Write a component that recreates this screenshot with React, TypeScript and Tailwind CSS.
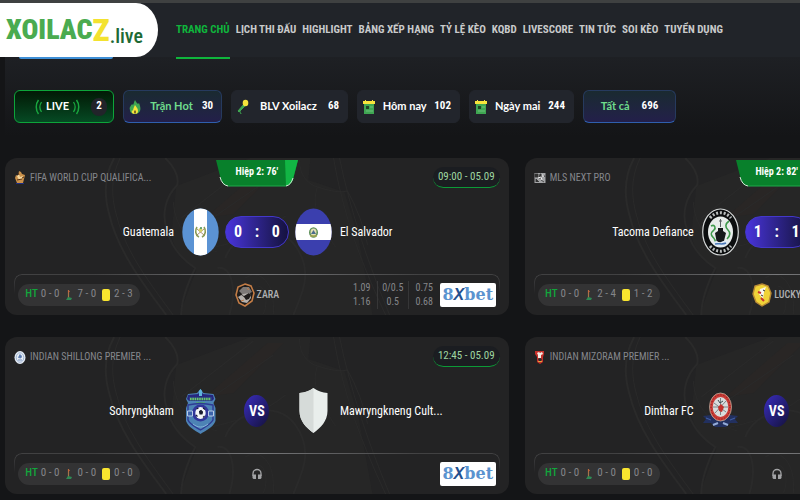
import type { ReactNode } from "react"

interface Match {
  league: string
  leagueIcon: ReactNode
  time: string
  live?: string
  score?: [number, number]
  home: string
  away: string
  homeLogo: ReactNode
  awayLogo: ReactNode
  stats: [string, string, string]
  caster?: string
  casterIcon?: ReactNode
  odds?: [string, string][]
}

const navItems = [
  "TRANG CHỦ",
  "LỊCH THI ĐẤU",
  "HIGHLIGHT",
  "BẢNG XẾP HẠNG",
  "TỶ LỆ KÈO",
  "KQBD",
  "LIVESCORE",
  "TIN TỨC",
  "SOI KÈO",
  "TUYỂN DỤNG",
]

// League icons

const TrophyIcon = () => (
  <svg className="h-4 w-3 shrink-0" viewBox="0 0 12 16">
    <path d="M5 1l2 1 1 2 3 1-1 4-1 4H3L1 8l1-3 2 1z" fill="#c9904a" />
    <path d="M3 6l2-2 1 3 3-1-1 3-3 1z" fill="#f6d9a0" />
    <path d="M4 3l1 2M8 8l2-1M3 10l5-1" stroke="#5a3213" strokeWidth="1" />
    <path d="M2 13h8v1H2z" fill="#1e2f86" />
  </svg>
)

const MlsIcon = () => (
  <svg className="h-4 w-3 shrink-0" viewBox="0 0 12 16">
    <rect x="0.500" y="3" width="11" height="10" fill="#a3a4a6" />
    <path d="M1 4h3v3H1zM6 4h1v4H5zM9 4l2 3M2 12V9l3 3M7 10l3 2" fill="#333" stroke="#333" strokeWidth="0.8" />
    <path d="M4 8l3-1 1 3M9 4v3" stroke="#f0f0f0" strokeWidth="1" fill="none" />
  </svg>
)

const ShillongIcon = () => (
  <svg className="h-4 w-3 shrink-0" viewBox="0 0 12 16">
    <ellipse cx="6" cy="8.500" rx="5.500" ry="6.500" fill="#e6edf5" />
    <ellipse cx="6" cy="8.500" rx="3.800" ry="4.700" fill="none" stroke="#8ba3c6" strokeWidth="0.8" />
    <path d="M4.500 8.500L6 5.500l1.500 1.500-.5 2zM4 11h4" fill="#5878ad" stroke="#5878ad" strokeWidth="0.8" />
  </svg>
)

const MizoramIcon = () => (
  <svg className="h-4 w-3 shrink-0" viewBox="0 0 12 16">
    <path d="M1 2h9v3l-1 3v5l-3 2-3-2V8L1 5z" fill="#c6302b" />
    <path d="M3 4l2-1 1 1 2-1 1 2-2 1v3H4V6z" fill="#f3ece6" />
    <path d="M4 10l2-1 2 1-1 2H5z" fill="#2b2b2b" />
    <path d="M4 12h4v1H4z" fill="#e3a33a" />
  </svg>
)

// Team crests

const GuatemalaFlag = () => (
  <svg className="h-12 w-[37px] shrink-0" viewBox="0 0 37 48">
    <defs>
      <clipPath id="gua">
        <ellipse cx="18.500" cy="24" rx="18.200" ry="23.500" />
      </clipPath>
    </defs>
    <g clipPath="url(#gua)">
      <rect width="37" height="48" fill="#5b93d4" />
      <rect x="12" width="13" height="48" fill="#fff" />
    </g>
    <path d="M15 19c-2 3-2 8 2 10M22 19c2 3 2 8-2 10" fill="none" stroke="#8a9a55" strokeWidth="1.600" />
    <path d="M15 21l7 6M22 21l-7 6" stroke="#98764f" strokeWidth="0.800" />
    <circle cx="18.500" cy="22" r="2" fill="#d8d46a" />
    <circle cx="19" cy="20" r="1" fill="#3f8f56" />
  </svg>
)

const SalvadorFlag = () => (
  <svg className="h-12 w-[37px] shrink-0" viewBox="0 0 37 48">
    <defs>
      <clipPath id="sal">
        <ellipse cx="18.500" cy="24" rx="18.200" ry="23.500" />
      </clipPath>
    </defs>
    <g clipPath="url(#sal)">
      <rect width="37" height="48" fill="#3b3fae" />
      <rect y="16" width="37" height="16" fill="#fff" />
    </g>
    <ellipse cx="18.500" cy="24.500" rx="4.500" ry="5.200" fill="#5d8f58" />
    <ellipse cx="18.500" cy="24" rx="3" ry="3.600" fill="#e3dfb4" />
    <path d="M16 26l2.500-4 2.500 4z" fill="#4b6d8c" />
    <path d="M15 28h7" stroke="#c9b24e" strokeWidth="1.200" />
  </svg>
)

const TacomaCrest = () => (
  <svg className="h-12 w-[37px] shrink-0" viewBox="0 0 37 48">
    <ellipse cx="18.500" cy="24" rx="17.800" ry="23" fill="#0c0e0f" stroke="#d5d8d8" strokeWidth="1.200" />
    <path d="M8 10c6-7 15-7 21 0" fill="none" stroke="#b9bcbc" strokeWidth="3" strokeDasharray="2 1.800" />
    <path d="M8 38c6 7 15 7 21 0" fill="none" stroke="#b9bcbc" strokeWidth="3" strokeDasharray="2 1.800" />
    <ellipse cx="18.500" cy="24" rx="12.500" ry="15.500" fill="#e7ecea" />
    <path d="M9 18c4-2 5 2 3 4s-4 3-2 6 4 3 3 6M27 13c-4 3-4 6-1 9s2 6-1 9" fill="none" stroke="#3f9a4c" strokeWidth="1.600" />
    <path d="M13 25l3-2v-3h5v3l3 2-2 8-3.500 2-4-2z" fill="#15191a" />
    <path d="M18.500 11v8M17 13h3" stroke="#5a6364" strokeWidth="1" />
    <path d="M11 34c3-2 5 1 8 0s5-2 8 0c-2 3-5 5-8.500 5S13 37 11 34z" fill="#dfe9f2" />
    <path d="M13 36c4-1 7 1 11-1" stroke="#4a78b8" strokeWidth="1.500" fill="none" />
  </svg>
)

const SohryngkhamCrest = () => (
  <svg className="h-12 w-[37px] shrink-0" viewBox="0 0 37 48">
    <path d="M18.500 2l3 4 10 1 2 5-2 4 2 5v13c-2 6-9 9-15 13C12.500 43 6 40 4 34V21l2-5-2-4 2-5 9-1z" fill="#4d83b5" />
    <path d="M6 8l10-1 2.500-3L21 7l10 1 1 4-2 2H7l-2-2z" fill="#26277f" />
    <path d="M17 4l1.500-2L20 4v5h-3z" fill="#5fb4dc" />
    <path d="M7 10h23v4H7z" fill="#2b3b86" />
    <path d="M8 12h21" stroke="#6cc968" strokeWidth="2.500" strokeDasharray="1.600 0.700" />
    <path d="M14 16h9" stroke="#4dab68" strokeWidth="1.500" />
    <path d="M6 18c8-2 17-2 25 0v15c-3 5-8 7-12.500 10C14 40 8 38 6 33z" fill="none" stroke="#2e3b94" strokeWidth="1.400" />
    <circle cx="18.500" cy="26" r="8.500" fill="#31369a" />
    <ellipse cx="18.500" cy="26" rx="5.200" ry="6" fill="#f4f6f8" />
    <path d="M17.500 24.500l1.500-1 1.500 1.500-.5 2h-2zM14.500 22l2-1M21 21l2 1.500M14 28l1.500 1.500M21 30.500l1.500-1.500" fill="#1b1d31" stroke="#1b1d31" strokeWidth="1.100" />
    <path d="M5.500 24h5v5h-5zM26.500 24h5v5h-5z" fill="#3c63ab" stroke="#b8cbe6" strokeWidth="1" />
    <path d="M11 37c5 4 10 4 15 0" fill="none" stroke="#83b3d8" strokeWidth="1" />
  </svg>
)

const BlankShield = () => (
  <svg className="h-12 w-[37px] shrink-0" viewBox="0 0 37 48">
    <path d="M18.500 1c4 3 9 4.500 14 5v18c0 10-7 17-14 22C11.500 41 4.500 34 4.500 24V6c5-.5 10-2 14-5z" fill="#e9eeec" />
    <path d="M18.500 1v45C11.500 41 4.500 34 4.500 24V6c5-.5 10-2 14-5z" fill="#d6dbd9" />
  </svg>
)

const DintharCrest = () => (
  <svg className="h-12 w-[37px] shrink-0" viewBox="0 0 37 48">
    <path d="M1 29l8-1h19l8 1-3 3 3 4h-8l-4 4H13l-4-4H1l3-4z" fill="#22305f" />
    <path d="M11 38l5-2M26 38l-5-2" stroke="#93abd8" strokeWidth="2" />
    <path d="M4 31l5 2M33 31l-5 2" stroke="#3f5ba4" strokeWidth="1.200" />
    <ellipse cx="18.500" cy="20" rx="11" ry="14" fill="#c93a35" stroke="#b6aa9b" strokeWidth="0.800" />
    <ellipse cx="18.500" cy="20" rx="9.500" ry="12.200" fill="none" stroke="#7c1f1d" strokeWidth="1" strokeDasharray="1 2" />
    <ellipse cx="18.500" cy="20" rx="7.800" ry="10" fill="#d9dcdc" />
    <path d="M18.500 11v17M12 16l12 9M24 14l-11 12M11 20h15" stroke="#7b8487" strokeWidth="1" />
    <path d="M16 20l3-3 3 3-2 5-3-1z" fill="#c4322d" />
    <path d="M16 13l2 3 3-2" stroke="#3a4b4f" strokeWidth="1" fill="none" />
  </svg>
)

const LionCrest = () => (
  <svg className="h-12 w-[37px] shrink-0" viewBox="0 0 37 48">
    <ellipse cx="18.500" cy="24" rx="18" ry="23" fill="#b93434" />
  </svg>
)

// Commentator avatars

const ZaraAvatar = () => (
  <svg className="h-6 w-5 shrink-0" viewBox="0 0 20 24">
    <path d="M10 1l6 2 3 7-2 8-7 5-6-3-3-8 2-8z" fill="#1f1c1b" stroke="#c27c46" strokeWidth="1.600" />
    <path d="M4 8l4-4 6 0 3 5-4 2-5 1z" fill="#7d7977" />
    <path d="M3 14l5-3 7-1 1 5-4 5-5-1z" fill="#b5b1ad" />
    <path d="M5 11l4 2 5-3 2 2-2 4-3 1-2-3z" fill="#1f1c1b" />
    <path d="M6 18l3-1M12 5l2 2" stroke="#c27c46" strokeWidth="1" fill="none" />
  </svg>
)

const LuckyAvatar = () => (
  <svg className="h-6 w-5 shrink-0" viewBox="0 0 20 24">
    <path d="M10 1l6 2 3 7-2 9-7 4-6-4-3-8 2-8z" fill="#f0d338" stroke="#b98a35" strokeWidth="1.400" />
    <path d="M8 6l6-2-2 5-1 7-4-5z" fill="#f8f6ee" />
    <path d="M6 9l3 1M9 15l3 3" stroke="#c9352b" strokeWidth="2" />
    <path d="M11 7l2 1M9 12l2 1" stroke="#333" strokeWidth="1" />
  </svg>
)

const Headphones = () => (
  <svg className="h-4 w-3 shrink-0" viewBox="0 0 12 16">
    <path d="M2 10V7.500C2 5 4 3.500 6 3.500S10 5 10 7.500V10" fill="none" stroke="#a2a3a5" strokeWidth="1.300" />
    <path d="M1.500 8.500H5v4.500H2.500l-1-1zM7 8.500h3.500V12l-1 1H7z" fill="#a2a3a5" />
  </svg>
)

const CornerIcon = () => (
  <svg className="h-3 w-2 shrink-0" viewBox="0 0 8 12">
    <path d="M3.500 1v8" stroke="#a4764b" strokeWidth="1.200" />
    <path d="M3 1l2 1.500L3 4z" fill="#c7643c" />
    <path d="M1 11l2-3 4 1-1 2z" fill="#2f8a55" />
  </svg>
)

const CardBackdrop = () => (
  <svg className="absolute inset-0 h-full w-full" viewBox="0 0 503 157" preserveAspectRatio="none" fill="none" stroke="#2a2a2a">
    <path d="M171 28L245 0h60l-2 22 36 12 14 46 14 77H174l17-45c-14-10-22-20-25-35z" fill="#262626" stroke="none" />
    <path d="M200 60L262 6h16l-50 50z" fill="#292625" stroke="none" />
    <path d="M109 0c-10 18-10 38-5 56 8 36 34 70 57 101" strokeWidth="2" />
    <path d="M115 0c-9 18-9 38-4 56 8 36 34 70 57 101" />
    <path d="M160 0c9 9 14 18 12 27-12 12-16 30-10 45 4 19 16 30 28 38-8 16-14 32-14 47" strokeWidth="2" />
    <path d="M168 44c2 30 20 44 44 50M176 60l72-56M184 76l84-58M196 92c30-6 60-14 84-34" />
    <path d="M220 100c8-24 50-40 70-12s4 52-2 69M212 110c14-2 20 20 12 47" strokeWidth="2" />
    <path d="M294 2c0 15 8 24 18 27 12 4 22 6 30 4 10 18 16 34 20 54M312 29c-8 20 6 42 18 60M328 0c10 60 30 110 52 157M334 0c10 50 30 110 50 157" />
    <path d="M240 120c14-10 30 4 28 36M252 128c10 0 10 20 6 28" />
  </svg>
)

const matches: Match[] = [
  {
    league: "FIFA WORLD CUP QUALIFICA...",
    leagueIcon: <TrophyIcon />,
    time: "09:00 - 05.09",
    live: "Hiệp 2: 76'",
    score: [0, 0],
    home: "Guatemala",
    away: "El Salvador",
    homeLogo: <GuatemalaFlag />,
    awayLogo: <SalvadorFlag />,
    stats: ["0 - 0", "7 - 0", "2 - 3"],
    caster: "ZARA",
    casterIcon: <ZaraAvatar />,
    odds: [["1.09", "1.16"], ["0/0.5", "0.5"], ["0.75", "0.68"]],
  },
  {
    league: "MLS NEXT PRO",
    leagueIcon: <MlsIcon />,
    time: "09:00 - 05.09",
    live: "Hiệp 2: 82'",
    score: [1, 1],
    home: "Tacoma Defiance",
    away: "",
    homeLogo: <TacomaCrest />,
    awayLogo: <LionCrest />,
    stats: ["0 - 0", "2 - 4", "1 - 2"],
    caster: "LUCKY",
    casterIcon: <LuckyAvatar />,
  },
  {
    league: "INDIAN SHILLONG PREMIER ...",
    leagueIcon: <ShillongIcon />,
    time: "12:45 - 05.09",
    home: "Sohryngkham",
    away: "Mawryngkneng Cult...",
    homeLogo: <SohryngkhamCrest />,
    awayLogo: <BlankShield />,
    stats: ["0 - 0", "0 - 0", "0 - 0"],
  },
  {
    league: "INDIAN MIZORAM PREMIER ...",
    leagueIcon: <MizoramIcon />,
    time: "12:45 - 05.09",
    home: "Dinthar FC",
    away: "",
    homeLogo: <DintharCrest />,
    awayLogo: <BlankShield />,
    stats: ["0 - 0", "0 - 0", "0 - 0"],
  },
]

// Filter bar icons

const WaveIcon = ({ flip }: { flip?: boolean }) => (
  <svg className={flip ? "h-4 w-2 -scale-x-100" : "h-4 w-2"} viewBox="0 0 8 16" fill="none" stroke="#19a63f">
    <path d="M3.500 1c-3 4-3 10 0 14" strokeWidth="1.500" />
    <path d="M6.500 3c-2 3-2 7 0 10" strokeWidth="1.300" />
  </svg>
)

const FlameIcon = () => (
  <svg className="h-4 w-3" viewBox="0 0 12 16">
    <path d="M6 1c1 2 2 3 3 4l1-1c1 3 2 5 1 8-1 2-3 3-5 3s-5-1-5-4c-1-3 1-4 2-6l1 1c1-2 1-3 2-5z" fill="#3fa652" />
    <path d="M6 6c1 2 3 3 3 6 0 2-1 3-3 3s-4-1-3-4l1 1c0-2 1-4 2-6z" fill="#f6e43c" />
    <path d="M6 11c1 1 1 3 0 4-1-1-1-3 0-4z" fill="#3b2f1c" />
  </svg>
)

const MicIcon = () => (
  <svg className="h-4 w-3" viewBox="0 0 12 16">
    <path d="M7 5L1 12l1 1 6-6zM3 12c-1 2 1 1 1 3" fill="#3fa652" stroke="#3fa652" strokeWidth="1" />
    <ellipse cx="8.500" cy="4" rx="2.800" ry="3.200" fill="#f6e43c" />
  </svg>
)

const CalendarIcon = () => (
  <svg className="h-4 w-3" viewBox="0 0 12 16">
    <rect x="1" y="5" width="10" height="10" fill="#3fa652" />
    <path d="M0 2h2V1h1v1h6V1h1v1h2v3H0z" fill="#f6e43c" />
    <path d="M3 7h3v3H3z" fill="#1f4526" />
    <path d="M7 8h3M3 12h7" stroke="#7ac985" strokeWidth="0.800" />
  </svg>
)

const filters = [
  { label: "Trận Hot", count: 30, icon: <FlameIcon />, hot: true, width: "w-[99px]" },
  { label: "BLV Xoilacz", count: 68, icon: <MicIcon />, hot: false, width: "w-[117px]" },
  { label: "Hôm nay", count: 102, icon: <CalendarIcon />, hot: false, width: "w-[103px]" },
  { label: "Ngày mai", count: 244, icon: <CalendarIcon />, hot: false, width: "w-[105px]" },
  { label: "Tất cả", count: 696, icon: null, hot: true, width: "w-[93px]" },
]

function Header() {
  return (
    <header className="relative z-10 flex h-[57px] items-stretch border-t-3 border-[#3f4141] bg-[#212429]">
      <a
        href="#"
        aria-label="Xoilacz.live"
        className="flex w-[158px] shrink-0 items-center rounded-r-[22px_27px] bg-white pl-1.5 font-['Roboto_Condensed','Liberation_Sans_Narrow',sans-serif] leading-none"
      >
        <span className="text-[28px] font-black text-[#4aab50]">XOILAC</span>
        <span className="text-[32px] font-black text-[#f3e22f]">Z</span>
        <span className="pt-3 text-[20px] font-medium text-[#1e6a35]">.live</span>
      </a>
      <nav className="ml-[18px] flex gap-1.5 font-['Roboto_Condensed','Liberation_Sans_Narrow',sans-serif] text-[11px] font-bold whitespace-nowrap">
        {navItems.map((item, i) => (
          <a
            key={item}
            href="#"
            className={
              i === 0
                ? "-mb-0.5 flex items-center border-b-2 border-[#0fb53c] text-[#0fb53c]"
                : "flex items-center text-[#c9cacb]"
            }
          >
            {item}
          </a>
        ))}
      </nav>
    </header>
  )
}

function FilterBar() {
  return (
    <div className="flex gap-[9px] pl-[9px] font-['Lato','Open_Sans',sans-serif] text-[11px] font-bold whitespace-nowrap">
      <button className="flex h-[33px] w-[100px] items-center justify-end gap-[3px] rounded-md border border-[#0da53a] bg-linear-to-b from-[#021a06] to-[#064a24] pr-1.5 text-white">
        <WaveIcon />
        <span>LIVE</span>
        <WaveIcon flip />
        <span className="ml-2 flex h-[18px] w-4 items-center justify-center rounded-full bg-[#22242a] font-['Roboto_Condensed','Liberation_Sans_Narrow',sans-serif]">
          2
        </span>
      </button>
      {filters.map((f) => (
        <button
          key={f.label}
          className={`flex h-[33px] items-center justify-center rounded-md border ${f.width} ${
            f.hot
              ? "border-[#263a5e] border-b-[#2f5fae] bg-linear-to-b from-[#1a2a30] to-[#231f4a] text-[#6fdc8c]"
              : "border-[#22252c] bg-[#22252c] text-white"
          }`}
        >
          {f.icon && <span className="ml-[5px] shrink-0">{f.icon}</span>}
          <span className={f.icon ? "flex-1 text-center" : "mr-3"}>{f.label}</span>
          <span
            className={`font-['Roboto_Condensed','Liberation_Sans_Narrow',sans-serif] text-white ${f.icon ? "mr-2" : ""}`}
          >
            {f.count}
          </span>
        </button>
      ))}
    </div>
  )
}

function MatchCard({ match }: { match: Match }) {
  return (
    <article className="relative overflow-hidden rounded-xl bg-[#232324] px-[9px] pt-[9px] font-['Roboto_Condensed','Liberation_Sans_Narrow',sans-serif]">
      <CardBackdrop />

      {match.live && (
        <div className="absolute top-0.5 left-1/2 h-7 w-[82px] -translate-x-1/2">
          <svg className="absolute inset-0 h-full w-full" viewBox="0 0 82 28">
            <path d="M0 0l5 20q2 6 7 6h57q5 0 8-6l5-20z" fill="#08802b" />
            <path d="M69 0h13l-5 19q-2 6-7 7z" fill="#12b544" />
            <path d="M4 17q2 8 8 9M70 26q5-1 7-8" fill="none" stroke="#d8ead9" strokeWidth="1" />
            <path d="M12 26h58" stroke="#1fa84a" strokeWidth="1" />
          </svg>
          <span className="relative block text-center text-[10px] leading-6 font-bold text-white">{match.live}</span>
        </div>
      )}

      <div className="relative flex h-[21px] items-center justify-between text-[11px]">
        <div className="flex items-center gap-1 text-[10px] text-[#85878c]">
          {match.leagueIcon}
          <span>{match.league}</span>
        </div>
        <time className="flex h-[21px] w-[67px] items-center justify-center rounded-full border-b border-[#0c9a37] bg-[#1b1d21] text-[#9fd6a0]">
          {match.time}
        </time>
      </div>

      <div className="relative mt-5 flex h-12 items-center text-xs text-white">
        <div className="flex flex-1 items-center justify-end gap-2">
          <span>{match.home}</span>
          {match.homeLogo}
        </div>
        <div className="mx-1.5 flex w-16 justify-center">
          {match.score ? (
            <div className="flex h-8 w-full items-center justify-between rounded-full border border-[#4338ca] bg-linear-to-r from-[#4934dd] to-[#15123f] px-2 text-base font-bold">
              <span>{match.score[0]}</span>
              <span>:</span>
              <span>{match.score[1]}</span>
            </div>
          ) : (
            <div className="flex h-8 w-[25px] items-center justify-center rounded-[50%] bg-linear-to-br from-[#3a2cc0] to-[#14113c] text-sm font-bold">
              VS
            </div>
          )}
        </div>
        <div className="flex flex-1 items-center gap-2">
          {match.awayLogo}
          <span>{match.away}</span>
        </div>
      </div>

      <footer className="relative mt-[18px] flex h-[41px] items-center justify-between px-1 text-[11px] text-[#85868a]">
        <div className="absolute inset-x-0 top-0 h-5 rounded-t-lg border border-b-0 border-[#414142] mask-b-from-10%" />
        <div className="absolute inset-x-20 top-0 h-px bg-linear-to-r from-transparent via-[#77787a] to-transparent" />

        <div className="relative flex h-[22px] w-[122px] items-center justify-center gap-1.5 rounded-full bg-[#333334]">
          <span className="flex gap-[3px]">
            <b className="font-medium text-[#12a53c]">HT</b>
            {match.stats[0]}
          </span>
          <span className="flex items-center gap-1">
            <CornerIcon />
            {match.stats[1]}
          </span>
          <span className="flex items-center gap-1">
            <i className="h-3 w-2 rounded-xs bg-[#f9e52f]" />
            {match.stats[2]}
          </span>
        </div>

        <div className="absolute inset-0 flex items-center justify-center gap-0.5 text-[10px] font-medium text-[#b0b1b3]">
          {match.caster ? (
            <>
              {match.casterIcon}
              {match.caster}
            </>
          ) : (
            <Headphones />
          )}
        </div>

        <div className="relative flex items-center">
          {match.odds && (
            <div className="flex divide-x divide-[#363637] text-center text-[10px] leading-[14px]">
              {match.odds.map(([top, bottom]) => (
                <div key={top} className="w-[31px]">
                  <div>{top}</div>
                  <div>{bottom}</div>
                </div>
              ))}
            </div>
          )}
          <a
            href="#"
            className="flex h-6 w-14 items-center justify-center rounded-xs bg-white font-['DejaVu_Serif',serif] text-base leading-none font-bold text-[#5b93cf]"
          >
            8<i className="font-['Liberation_Sans',sans-serif] text-[#23508f]">X</i>bet
          </a>
        </div>
      </footer>
    </article>
  )
}

export default function App() {
  return (
    <div className="min-h-screen overflow-hidden bg-[#141517]">
      <Header />
      <main className="pl-[5px]">
        <section className="h-[79px] bg-linear-to-b from-[#1e2024] to-[#141517]">
          <div className="ml-3.5 h-0.5 w-[94px] rounded-b-md bg-[#3f8fd6]" />
          <div className="pt-[31px]">
            <FilterBar />
          </div>
        </section>
        <section className="mt-[22px] grid w-[129%] grid-cols-2 gap-x-4 gap-y-[22px] pr-0.5">
          {matches.map((m) => (
            <MatchCard key={m.league} match={m} />
          ))}
        </section>
      </main>
    </div>
  )
}
